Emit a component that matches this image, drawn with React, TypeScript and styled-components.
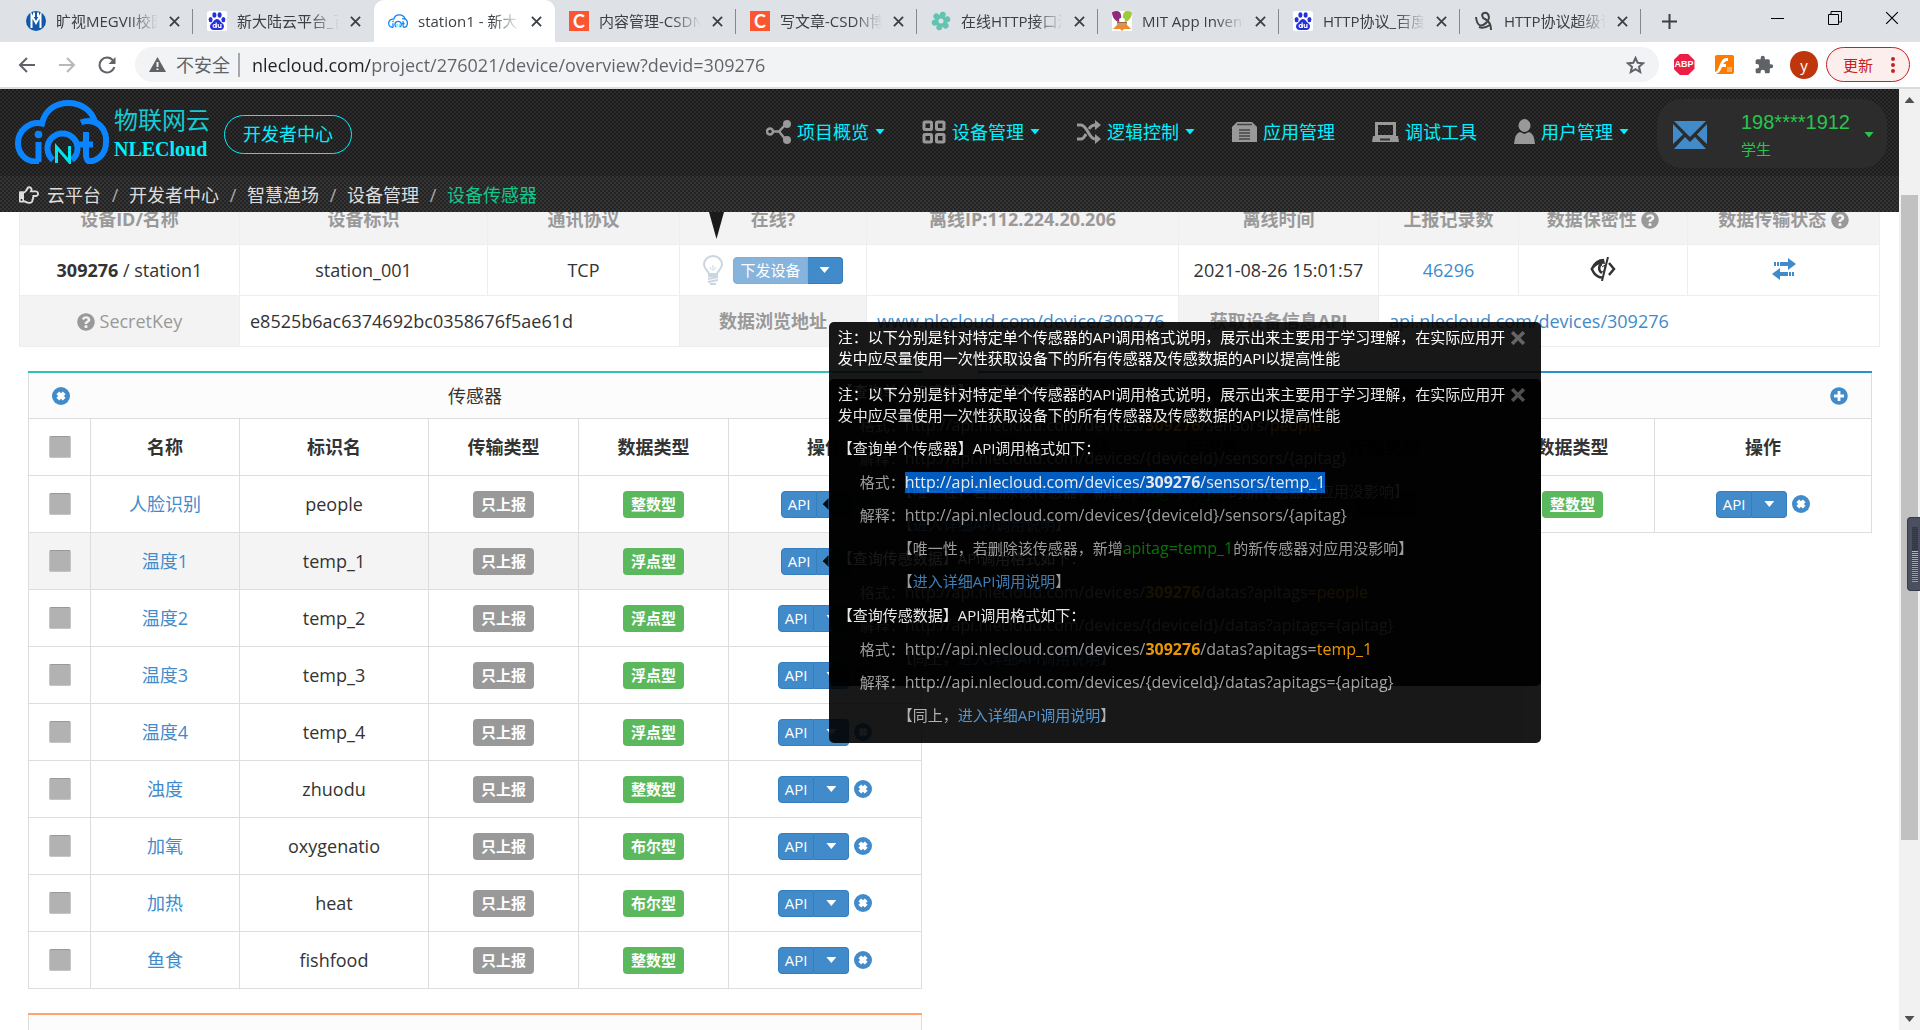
import React from "react";
import styled, { createGlobalStyle, css } from "styled-components";
import { FaQuestionCircle, FaPlusCircle, FaRegHandPointRight } from "react-icons/fa";

const SANS = `"Open Sans", "Noto Sans CJK SC", sans-serif`;

const GlobalStyle = createGlobalStyle`
  *, *::before, *::after { box-sizing: border-box; }
  body { margin: 0; background: #fff; color: #333; font: 18px/24px ${SANS}; overflow: hidden; }
  button, input { font: inherit; color: inherit; }
  button { border: 0; background: none; padding: 0; cursor: pointer; }
  a { color: #428bca; text-decoration: none; }
  p, h2, ol { margin: 0; padding: 0; font: inherit; list-style: none; }
  svg { display: block; flex: none; }
`;

const Window = styled.div`
  display: flex;
  flex-direction: column;
  height: 100vh;
`;

/* ---------- browser chrome ---------- */

const TabStrip = styled.div`
  display: flex;
  align-items: stretch;
  height: 42px;
  padding-left: 12px;
  background: #dee1e6;
`;

const TabBox = styled.div<{ $active?: boolean; $divider?: boolean }>`
  flex: 0 1 181px;
  min-width: 0;
  display: flex;
  align-items: center;
  gap: 10px;
  padding: 0 13px 0 14px;
  color: #3c4043;
  ${(p) =>
    p.$active &&
    css`
      background: #fff;
      border-radius: 10px 10px 0 0;
    `}
  ${(p) =>
    p.$divider &&
    css`
      background: linear-gradient(#85888c, #85888c) right center / 1px 25px no-repeat;
    `}
`;

const TabTitle = styled.span`
  flex: 1;
  min-width: 0;
  overflow: hidden;
  white-space: nowrap;
  font-size: 15px;
  line-height: 22px;
  mask-image: linear-gradient(to right, #000 72%, transparent 100%);
`;

const TabClose = styled.button`
  display: grid;
  place-items: center;
  width: 12px;
  height: 20px;
  color: #3c4043;
`;

const NewTab = styled.button`
  display: grid;
  place-items: center;
  width: 56px;
  color: #3c4043;
`;

const WindowControls = styled.div`
  display: flex;
  margin-left: auto;
  height: 36px;
  color: #000;
  button {
    display: grid;
    place-items: center;
    width: 57px;
  }
`;

const Favicon = styled.span<{ $bg?: string }>`
  flex: none;
  display: grid;
  place-items: center;
  width: 20px;
  height: 20px;
  background: ${(p) => p.$bg || "transparent"};
  color: #fff;
  font: bold 18px/20px Lato, sans-serif;
`;

const Toolbar = styled.div`
  display: flex;
  align-items: center;
  height: 47px;
  padding: 0 10px 0 7px;
  border-bottom: 2px solid #dadce0;
  color: #5f6368;
`;

const ToolButton = styled.button<{ $faded?: boolean }>`
  display: grid;
  place-items: center;
  width: 40px;
  height: 36px;
  opacity: ${(p) => (p.$faded ? 0.45 : 1)};
`;

const Omnibox = styled.div`
  flex: 1;
  display: flex;
  align-items: center;
  height: 35px;
  margin-left: 8px;
  margin-right: 5px;
  padding: 0 14px;
  border-radius: 18px;
  background: #f1f3f4;
`;

const Insecure = styled.button`
  display: flex;
  align-items: center;
  gap: 10px;
  padding-right: 8px;
  margin-right: 12px;
  border-right: 2px solid #a5a8ac;
  line-height: 24px;
`;

const Address = styled.input`
  flex: 1;
  min-width: 0;
  border: 0;
  outline: 0;
  padding: 0;
  height: 30px;
  color: #5f6368;
  background: linear-gradient(to right, #202124 118px, #5f6368 118px);
  background-clip: text;
  -webkit-background-clip: text;
  -webkit-text-fill-color: transparent;
`;

const AbpBadge = styled.span`
  width: 21px;
  height: 21px;
  background: #ed1e45;
  color: #fff;
  font: bold 9px/21px "Liberation Sans", sans-serif;
  clip-path: polygon(30% 0, 70% 0, 100% 30%, 100% 70%, 70% 100%, 30% 100%, 0 70%, 0 30%);
`;

const Avatar = styled.button`
  width: 28px;
  height: 28px;
  margin: 0 8px 0 6px;
  border-radius: 50%;
  background: #bf360c;
  color: #fff;
  font-size: 15px;
  line-height: 26px;
`;

const UpdateButton = styled.button`
  display: flex;
  align-items: center;
  justify-content: space-between;
  width: 84px;
  height: 35px;
  padding: 0 14px 0 16px;
  border: 1px solid #c5221f;
  border-radius: 18px;
  background: #fceeed;
  color: #c5221f;
  font-size: 15px;
`;

/* ---------- page frame ---------- */

const Viewport = styled.div`
  flex: 1;
  min-height: 0;
  display: flex;
  position: relative;
`;

const Page = styled.div`
  flex: 1;
  min-width: 0;
  display: flex;
  flex-direction: column;
`;

const Scrollbar = styled.div`
  width: 21px;
  display: flex;
  flex-direction: column;
  align-items: center;
  justify-content: space-between;
  padding: 8px 0;
  background: #f1f1f1;
`;

const ScrollTrack = styled.div`
  flex: 1;
  width: 17px;
  padding: 92px 0 176px;
  &::before {
    content: "";
    display: block;
    height: 100%;
    background: #c1c1c1;
  }
`;

const Triangle = styled.span<{ $up?: boolean; $color?: string }>`
  display: inline-block;
  flex: none;
  width: 10px;
  height: 6px;
  background: ${(p) => p.$color || "currentColor"};
  clip-path: ${(p) => (p.$up ? "polygon(0 100%, 50% 0, 100% 100%)" : "polygon(0 0, 100% 0, 50% 100%)")};
`;

const LevelMeter = styled.div`
  position: absolute;
  right: 0;
  top: 428px;
  width: 13px;
  height: 74px;
  padding: 9px 2px 8px 4px;
  border: 1px solid #363a47;
  border-right: 0;
  border-radius: 4px 0 0 4px;
  background: #4b5060;
  &::before {
    content: "";
    display: block;
    height: 100%;
    background: repeating-linear-gradient(to bottom, transparent 0 1px, #3a3f4d 1px 2px),
      linear-gradient(to bottom, #343946 0 44%, #c8c63c 44%, #7cc25a 72%, #4fc3ad 100%);
  }
`;

const weave = (dark: string, light: string) => css`
  background: repeating-conic-gradient(${dark} 0 25%, ${light} 0 50%) 0 0 / 4px 4px;
`;

const SiteHeader = styled.header`
  position: relative;
  z-index: 5;
`;

const HeaderMain = styled.div`
  display: flex;
  align-items: center;
  height: 87px;
  padding: 0 12px 2px 15px;
  ${weave("#1d1d1d", "#2b2b2b")}
`;

const Brand = styled.a`
  display: flex;
  align-items: center;
  gap: 5px;
`;

const BrandText = styled.span`
  display: grid;
  padding-top: 4px;
  color: #17c9d2;
  font-size: 24px;
  line-height: 30px;
  strong {
    color: #00f0ff;
    font: bold 20px/28px "Liberation Serif", serif;
  }
`;

const CenterButton = styled.a`
  margin: 6px 0 0 14px;
  padding: 0 18px;
  border: 1px solid #00f0ff;
  border-radius: 20px;
  color: #00f0ff;
  line-height: 37px;
  white-space: nowrap;
`;

const MainNav = styled.nav`
  display: flex;
  gap: 37px;
  margin-left: auto;
  margin-right: 28px;
  a {
    display: flex;
    align-items: center;
    gap: 6px;
    color: #00f0ff;
    white-space: nowrap;
  }
  svg {
    color: #999;
  }
`;

const Account = styled.div`
  display: flex;
  align-items: center;
  height: 69px;
  width: 230px;
  margin-top: 4px;
  padding: 2px 13px 0 16px;
  border-radius: 25px;
  background: #2c2c2c;
  color: #2ac44e;
`;

const AccountName = styled.div`
  flex: 1;
  margin-left: 34px;
  font: 20px/28px "Liberation Sans", sans-serif;
  small {
    display: block;
    font: 15px/26px ${SANS};
  }
`;

const Crumbs = styled.nav`
  display: flex;
  align-items: center;
  height: 36px;
  padding: 1px 0 0 19px;
  color: #ddd;
  ${weave("#232323", "#353535")}
  ol {
    display: flex;
    margin-left: 8px;
  }
  li + li::before {
    content: "/";
    display: inline-block;
    width: 28px;
    text-align: center;
    color: #aaa;
  }
  a {
    color: #ddd;
  }
  li:last-child a {
    color: #10c78c;
  }
`;

const Content = styled.main`
  flex: 1;
  min-height: 0;
  overflow: hidden;
`;

/* ---------- device table ---------- */

const DeviceTable = styled.table`
  width: calc(100% - 38px);
  margin: -19px 19px 0;
  table-layout: fixed;
  border-collapse: collapse;
  text-align: center;
  th,
  td {
    height: 51px;
    padding: 0 10px;
    border: 1px solid #eee;
    white-space: nowrap;
  }
  th {
    background: #f3f3f3;
    color: #999;
  }
  svg {
    display: inline-block;
    vertical-align: -3px;
  }
`;

const LeftCell = styled.td`
  text-align: left;
`;

const PlainTh = styled.th`
  font-weight: 400;
`;

const OnlineCell = styled.td`
  position: relative;
`;

const HintArrow = styled.span`
  position: absolute;
  left: 29px;
  top: -33px;
  width: 15px;
  height: 27px;
  background: #1a1a1a;
  clip-path: polygon(0 0, 100% 0, 50% 100%);
`;

const Inline = styled.div<{ $gap: number; $shift?: boolean }>`
  display: flex;
  align-items: center;
  justify-content: center;
  gap: ${(p) => p.$gap}px;
  padding-left: ${(p) => (p.$shift ? 6 : 0)}px;
`;

/* ---------- buttons and labels ---------- */

const Group = styled.div`
  display: flex;
  position: relative;
`;

const GroupButton = styled.button<{ $light?: boolean }>`
  height: 27px;
  padding: 0 6px;
  border: 1px solid #357ebd;
  background: #428bca;
  color: #fff;
  font-size: 15px;
  line-height: 24px;
  border-radius: 4px 0 0 4px;
  ${(p) =>
    p.$light &&
    css`
      border-color: #7dafda;
      background: #86b4dd;
    `}
`;

const DropButton = styled.button`
  display: grid;
  place-items: center;
  width: 35px;
  height: 27px;
  border: 1px solid #357ebd;
  border-left: 0;
  border-radius: 0 4px 4px 0;
  background: #428bca;
  color: #fff;
`;

const IconButton = styled.button`
  color: #428bca;
`;

const Tag = styled.span<{ $green?: boolean; $linked?: boolean }>`
  display: inline-block;
  height: 27px;
  padding: 0 8px;
  border-radius: 4px;
  background: ${(p) => (p.$green ? "#5cb85c" : "#999")};
  color: #fff;
  font-size: 15px;
  font-weight: 700;
  line-height: 26px;
  vertical-align: middle;
  text-decoration: ${(p) => (p.$linked ? "underline" : "none")};
`;

const Tick = styled.input`
  appearance: none;
  display: block;
  width: 22px;
  height: 22px;
  margin: 0 auto;
  border: 1px solid #c4c4c4;
  border-top-color: #999;
  border-radius: 2px;
  background: #b2b2b2;
`;

/* ---------- panels ---------- */

const Panels = styled.div`
  display: flex;
  align-items: flex-start;
  gap: 57px;
  padding: 24px 28px 0;
`;

const PanelColumn = styled.div`
  flex: 1;
  min-width: 0;
  display: grid;
  gap: 24px;
`;

const Panel = styled.section<{ $accent: string }>`
  border-top: 2px solid ${(p) => p.$accent};
`;

const PanelHead = styled.div`
  display: grid;
  grid-template-columns: 1fr auto 1fr;
  align-items: center;
  height: 45px;
  padding: 0 23px;
  border: solid #ddd;
  border-width: 0 1px;
  background: #fcfcfc;
  > :last-child {
    justify-self: end;
  }
`;

const SensorTable = styled.table`
  width: 100%;
  table-layout: fixed;
  border-collapse: collapse;
  text-align: center;
  th,
  td {
    height: 57px;
    padding: 0;
    border: 1px solid #ddd;
  }
`;

const Row = styled.tr<{ $hover?: boolean }>`
  background: ${(p) => (p.$hover ? "#f4f4f4" : "transparent")};
`;

/* ---------- API popover ---------- */

const Popover = styled.div`
  position: absolute;
  z-index: 3;
  left: 48px;
  top: 50%;
  width: 712px;
  height: 364px;
  margin-top: -182px;
  padding: 5px 0 0 9px;
  border-radius: 5px;
  background: #000;
  color: #aaa;
  opacity: 0.9;
  font-size: 15px;
  line-height: 21px;
  text-align: left;
  &::before {
    content: "";
    position: absolute;
    left: -6px;
    top: 176px;
    width: 6px;
    height: 12px;
    background: #000;
    clip-path: polygon(100% 0, 100% 100%, 0 50%);
  }
`;

const PopNote = styled.div`
  display: flex;
  align-items: flex-start;
  margin-bottom: 5px;
  color: #fff;
  p {
    flex: 1;
  }
  button {
    width: 30px;
    height: 21px;
    display: grid;
    place-items: center start;
    color: #555;
  }
`;

const PopTitle = styled.h2`
  color: #fff;
  line-height: 35px;
`;

const PopLine = styled.p<{ $deep?: boolean }>`
  display: flex;
  line-height: 33px;
  padding-left: ${(p) => (p.$deep ? 60 : 22)}px;
  white-space: nowrap;
`;

const Code = styled.code<{ $selected?: boolean }>`
  font: 16px/21px ${SANS};
  align-self: center;
  b {
    color: #ffa500;
  }
  ${(p) =>
    p.$selected &&
    css`
      background: #0063d1;
      &,
      b,
      em {
        color: #fff !important;
      }
    `}
`;

const Param = styled.em<{ $green?: boolean }>`
  font-size: 16px;
  font-style: normal;
  color: ${(p) => (p.$green ? "#008000" : "#ffa500")};
`;

/* ---------- drawings ---------- */

const Cross = ({ size = 11, width = 2 }: { size?: number; width?: number }) => (
  <svg width={size} height={size} viewBox="0 0 12 12" stroke="currentColor" strokeWidth={width} fill="none">
    <path d="M1 1L11 11M11 1L1 11" />
  </svg>
);

const RemoveIcon = () => (
  <svg width="18" height="18" viewBox="0 0 18 18">
    <circle cx="9" cy="9" r="9" fill="currentColor" />
    <path d="M5.8 5.8L12.2 12.2M12.2 5.8L5.8 12.2" stroke="#fff" strokeWidth="4" />
  </svg>
);

const Paw = () => (
  <svg width="20" height="20" viewBox="0 0 20 20">
    <rect width="20" height="20" rx="2" fill="#fff" />
    <g fill="#2430dc">
      <ellipse cx="3.6" cy="8.6" rx="2" ry="2.7" />
      <ellipse cx="7.4" cy="4" rx="2" ry="2.8" />
      <ellipse cx="12.6" cy="4" rx="2" ry="2.8" />
      <ellipse cx="16.4" cy="8.6" rx="2" ry="2.7" />
      <path d="M10 8C7.5 8 6.5 11 4.3 12.6C1.8 15 3.2 19 6.4 19H13.6C16.8 19 18.2 15 15.7 12.6C13.5 11 12.5 8 10 8Z" />
    </g>
    <g stroke="#fff" strokeWidth="1.2" fill="none">
      <circle cx="7.6" cy="15" r="1.5" />
      <path d="M9.2 11.5V17M11.2 13V15.5Q11.3 16.5 12.5 16.5T13.8 15.5M13.9 13V17" />
    </g>
  </svg>
);

const CloudLogo = ({ width, height, thick = 6 }: { width: number; height: number; thick?: number }) => (
  <svg width={width} height={height} viewBox="0 0 94 64" fill="none" stroke="#0a84ff" strokeWidth={thick}>
    <path d="M24 61.5H20A18 18 0 0 1 3 43A20 20 0 0 1 27 23.5C30 10 41 3 53 3C67 3 77 11 80 22A20 20 0 0 1 91 42C91 54 83 61 74 61.5C71 60 71 56 71 52V32" />
    <path d="M66 22.5C72 20 77 21 82 23M23.5 42V62M64 44.5H78" />
    <circle cx="23.5" cy="34.5" r="3.8" fill="#0a84ff" stroke="none" />
    <path d="M38 60A15 15 0 1 1 57 60" />
    <path d="M41.5 63V47L54.5 62V46" stroke="#00e5f0" strokeWidth={thick / 2} />
  </svg>
);

const MegIcon = () => (
  <svg width="20" height="20" viewBox="0 0 20 20">
    <circle cx="10" cy="10" r="10" fill="#1258a8" />
    <path d="M5.5 17V4L10 12L14.5 4V17M8 1.500V6M12 1.500V6" stroke="#fff" strokeWidth="2" fill="none" />
  </svg>
);

const FlowerIcon = () => (
  <svg width="20" height="20" viewBox="0 0 20 20" fill="#62c3b0">
    {[0, 60, 120, 180, 240, 300].map((a) => (
      <circle key={a} cx="10" cy="3.5" r="3" transform={`rotate(${a + 15} 10 10)`} />
    ))}
    <circle cx="10" cy="10" r="6" />
    <circle cx="10" cy="10" r="2.5" fill="#dee1e6" />
  </svg>
);

const BeeIcon = () => (
  <svg width="20" height="20" viewBox="0 0 20 20">
    <rect width="20" height="20" fill="#fff" />
    <path d="M0 1Q8-2 9 4Q10 10 6 11Q0 8 0 1Z" fill="#8e2a7a" />
    <path d="M20 1Q12-2 11 4Q10 10 14 11Q20 8 20 1Z" fill="#9fcb3b" />
    <rect x="7" y="7" width="6" height="4" rx="2" fill="#fff" />
    <rect x="5" y="11" width="10" height="5" fill="#a06a3c" />
    <path d="M1 18L5 14H15L19 18H12L10 20L8 18Z" fill="#f08a2c" />
    <path d="M5 13H15" stroke="#e8c9a0" />
  </svg>
);

const SketchIcon = () => (
  <svg width="20" height="20" viewBox="0 0 20 20" fill="none" stroke="#444" strokeWidth="2">
    <path d="M2 6C3 15 7 17 13 11M13 11C17 6 14 1 10 2C7 3 8 7 11 8C15 10 17 13 17 19" />
    <path d="M5 16Q10 18 16 14" />
  </svg>
);

const Bulb = () => (
  <svg width="20" height="30" viewBox="0 0 20 30" fill="none" stroke="#cbd5e0" strokeWidth="2">
    <path d="M6 19C5 15 1 14 1 9.5A9 8.5 0 0 1 19 9.5C19 14 15 15 14 19Z" />
    <path d="M5 21H15M5 24L15 22M5 27L15 25M7 29H13" />
    <path d="M10 16V10M7 12L8.5 14.5M13 12L11.5 14.5" strokeWidth="1" />
  </svg>
);

const EyeClosed = () => (
  <svg width="26" height="24" viewBox="0 0 26 24" fill="none" stroke="#333" strokeWidth="2.5">
    <path d="M14 3C8 3 4 7 1.800 12C4 17 8 20.500 12 20.500" />
    <path d="M19 6L24 12L19 18" />
    <path d="M14 2Q5 4 3 12Q8 6 15 7Z" fill="#333" stroke="none" />
    <path d="M12 7C8.500 8 8 14 12 16" />
    <path d="M12 10L15 8L14 14L12 15" strokeWidth="1" />
    <path d="M18 0L12 24" strokeWidth="2" />
  </svg>
);

const Transfer = () => (
  <svg width="24" height="22" viewBox="0 0 24 22" fill="#428bca">
    <path d="M2 4H4V8H2ZM5 4H7V8H5ZM8 4H16V0L24 6L16 12V8H8Z" />
    <path d="M22 14H20V18H22ZM19 14H17V18H19ZM16 14H8V10L0 16L8 22V18H16Z" />
  </svg>
);

const PuzzleIcon = () => (
  <svg width="20" height="20" viewBox="0 0 24 24" fill="currentColor">
    <path d="M20.5 11H19V7c0-1.1-.9-2-2-2h-4V3.500a2.500 2.500 0 0 0-5 0V5H4c-1.100 0-2 .9-2 2v3.800h1.500a2.700 2.700 0 0 1 0 5.400H2V20c0 1.100.9 2 2 2h3.800v-1.500a2.700 2.700 0 0 1 5.400 0V22H17c1.100 0 2-.9 2-2v-4h1.500a2.500 2.500 0 0 0 0-5z" />
  </svg>
);

const ShareIcon = () => (
  <svg width="25" height="24" viewBox="0 0 25 24">
    <g stroke="currentColor" strokeWidth="2.5" fill="none">
      <circle cx="4" cy="11.5" r="3" />
      <path d="M7 11.5H13L20 4M13 11.5L20 20" />
    </g>
    <circle cx="21" cy="4" r="4" fill="currentColor" />
    <circle cx="21" cy="20" r="4" fill="currentColor" />
  </svg>
);

const GridIcon = () => (
  <svg width="24" height="24" viewBox="0 0 24 24" fill="none" stroke="currentColor" strokeWidth="3">
    <rect x="2" y="2" width="7.5" height="7.5" rx="1" />
    <rect x="14.5" y="2" width="7.5" height="7.5" rx="1" />
    <rect x="2" y="14.5" width="7.5" height="7.5" rx="1" />
    <rect x="14.5" y="14.5" width="7.5" height="7.5" rx="1" />
  </svg>
);

const ShuffleIcon = () => (
  <svg width="24" height="24" viewBox="0 0 24 24" fill="none" stroke="currentColor" strokeWidth="3">
    <path d="M0 5H4C10 5 12 19 18 19H20M0 19H4C6 19 8 16 9 14M12 9C14 6 15 5 18 5H20" />
    <path d="M18 0L24 5L18 10ZM18 14L24 19L18 24Z" fill="currentColor" stroke="none" />
  </svg>
);

const AppIcon = () => (
  <svg width="25" height="20" viewBox="0 0 25 20" fill="currentColor">
    <path d="M5 0H20L25 5V20H0V5Z" />
    <path d="M5 2.500H20M7 8H18M7 11H18M7 14H18M7 17H18" stroke="#444" strokeWidth="1.5" />
  </svg>
);

const LaptopIcon = () => (
  <svg width="27" height="20" viewBox="0 0 27 20">
    <rect x="4.500" y="1.500" width="18" height="13" fill="none" stroke="currentColor" strokeWidth="3" />
    <path d="M1 14H26L27 20H0Z" fill="currentColor" />
    <path d="M8 17.500H18" stroke="#333" strokeWidth="2" />
  </svg>
);

const PersonIcon = () => (
  <svg width="21" height="25" viewBox="0 0 21 25" fill="currentColor">
    <ellipse cx="10.5" cy="6.5" rx="6" ry="6.5" />
    <path d="M6 13L10.5 15L15 13Q20 14 21 25H0Q1 14 6 13Z" />
  </svg>
);

const MailIcon = () => (
  <svg width="34" height="28" viewBox="0 0 34 28" fill="#428bca">
    <path d="M1 0H33L17 16ZM0 3L10 13.5L0 23ZM34 3L24 13.5L34 23ZM1 28L12 16L17 21L22 16L33 28Z" />
  </svg>
);

/* ---------- data ---------- */

const tabs = [
  { icon: <MegIcon />, title: "旷视MEGVII校园招聘", divider: true },
  { icon: <Paw />, title: "新大陆云平台_百度搜索" },
  { icon: <CloudLogo width={20} height={16} />, title: "station1 - 新大陆物联网", active: true },
  { icon: "C", bg: "#fc5531", title: "内容管理-CSDN博客", divider: true },
  { icon: "C", bg: "#fc5531", title: "写文章-CSDN博客", divider: true },
  { icon: <FlowerIcon />, title: "在线HTTP接口测试", divider: true },
  { icon: <BeeIcon />, title: "MIT App Inventor", divider: true },
  { icon: <Paw />, title: "HTTP协议_百度百科", divider: true },
  { icon: <SketchIcon />, title: "HTTP协议超级详解", divider: true },
];

const menu = [
  { icon: <ShareIcon />, label: "项目概览", drop: true },
  { icon: <GridIcon />, label: "设备管理", drop: true },
  { icon: <ShuffleIcon />, label: "逻辑控制", drop: true },
  { icon: <AppIcon />, label: "应用管理" },
  { icon: <LaptopIcon />, label: "调试工具" },
  { icon: <PersonIcon />, label: "用户管理", drop: true },
];

const crumbs = ["云平台", "开发者中心", "智慧渔场", "设备管理", "设备传感器"];

type Item = { name: string; tag: string; type: string; open?: boolean; hover?: boolean; selected?: boolean; linked?: boolean };

const sensors: Item[] = [
  { name: "人脸识别", tag: "people", type: "整数型", open: true },
  { name: "温度1", tag: "temp_1", type: "浮点型", open: true, hover: true, selected: true },
  { name: "温度2", tag: "temp_2", type: "浮点型" },
  { name: "温度3", tag: "temp_3", type: "浮点型" },
  { name: "温度4", tag: "temp_4", type: "浮点型" },
  { name: "浊度", tag: "zhuodu", type: "整数型" },
  { name: "加氧", tag: "oxygenatio", type: "布尔型" },
  { name: "加热", tag: "heat", type: "布尔型" },
  { name: "鱼食", tag: "fishfood", type: "整数型" },
];

const actuators: Item[] = [{ name: "test", tag: "test1", type: "整数型", linked: true }];

/* ---------- composed parts ---------- */

const ApiPopover = ({ tag, selected }: { tag: string; selected?: boolean }) => (
  <Popover role="tooltip">
    <PopNote>
      <p>
        注：以下分别是针对特定单个传感器的API调用格式说明，展示出来主要用于学习理解，在实际应用开发中应尽量使用一次性获取设备下的所有传感器及传感数据的API以提高性能
      </p>
      <button aria-label="关闭">
        <Cross size={14} width={3} />
      </button>
    </PopNote>
    <PopTitle>【查询单个传感器】API调用格式如下：</PopTitle>
    <PopLine>
      格式：
      <Code $selected={selected}>
        http://api.nlecloud.com/devices/<b>309276</b>/sensors/<Param>{tag}</Param>
      </Code>
    </PopLine>
    <PopLine>
      解释：<Code>{"http://api.nlecloud.com/devices/{deviceId}/sensors/{apitag}"}</Code>
    </PopLine>
    <PopLine $deep>
      【唯一性，若删除该传感器，新增<Param $green>apitag={tag}</Param>的新传感器对应用没影响】
    </PopLine>
    <PopLine $deep>
      【<a href="#api">进入详细API调用说明</a>】
    </PopLine>
    <PopTitle>【查询传感数据】API调用格式如下：</PopTitle>
    <PopLine>
      格式：
      <Code>
        http://api.nlecloud.com/devices/<b>309276</b>/datas?apitags=<Param>{tag}</Param>
      </Code>
    </PopLine>
    <PopLine>
      解释：<Code>{"http://api.nlecloud.com/devices/{deviceId}/datas?apitags={apitag}"}</Code>
    </PopLine>
    <PopLine $deep>
      【同上，<a href="#api">进入详细API调用说明</a>】
    </PopLine>
  </Popover>
);

const ItemTable = ({ items, widths }: { items: Item[]; widths: number[] }) => (
  <SensorTable>
    <colgroup>
      {widths.map((w, i) => (
        <col key={i} width={w} />
      ))}
    </colgroup>
    <thead>
      <tr>
        <th>
          <Tick type="checkbox" aria-label="全选" />
        </th>
        {["名称", "标识名", "传输类型", "数据类型", "操作"].map((h) => (
          <th key={h}>{h}</th>
        ))}
      </tr>
    </thead>
    <tbody>
      {items.map((s) => (
        <Row key={s.tag} $hover={s.hover}>
          <td>
            <Tick type="checkbox" aria-label={s.name} />
          </td>
          <td>
            <a href="#item">{s.name}</a>
          </td>
          <td>{s.tag}</td>
          <td>
            <Tag>只上报</Tag>
          </td>
          <td>
            <Tag $green $linked={s.linked}>
              {s.type}
            </Tag>
          </td>
          <td>
            <Inline $gap={5} $shift={s.open}>
              <Group>
                <GroupButton>API</GroupButton>
                <DropButton aria-label="更多">
                  <Triangle />
                </DropButton>
                {s.open && <ApiPopover tag={s.tag} selected={s.selected} />}
              </Group>
              <IconButton aria-label="删除">
                <RemoveIcon />
              </IconButton>
            </Inline>
          </td>
        </Row>
      ))}
    </tbody>
  </SensorTable>
);

const BrowserChrome = () => (
  <>
    <TabStrip>
      {tabs.map((t, i) => (
        <TabBox key={i} $active={t.active} $divider={t.divider}>
          <Favicon $bg={t.bg}>{t.icon}</Favicon>
          <TabTitle>{t.title}</TabTitle>
          <TabClose aria-label="关闭标签页">
            <Cross size={11} />
          </TabClose>
        </TabBox>
      ))}
      <NewTab aria-label="新标签页">
        <svg width="15" height="15" viewBox="0 0 15 15" stroke="currentColor" strokeWidth="2">
          <path d="M7.5 0V15M0 7.5H15" />
        </svg>
      </NewTab>
      <WindowControls>
        <button aria-label="最小化">
          <svg width="14" height="14" stroke="currentColor">
            <path d="M0 7.5H13" />
          </svg>
        </button>
        <button aria-label="还原">
          <svg width="14" height="14" stroke="currentColor" fill="none">
            <path d="M.5 3.5H10.5V13.5H.5ZM3 3.5V.5H13.5V11H10.5" />
          </svg>
        </button>
        <button aria-label="关闭">
          <Cross size={14} width={1} />
        </button>
      </WindowControls>
    </TabStrip>
    <Toolbar>
      <ToolButton aria-label="后退">
        <svg width="18" height="16" viewBox="0 0 18 16" fill="none" stroke="currentColor" strokeWidth="2">
          <path d="M17 8H2M9 1L2 8L9 15" />
        </svg>
      </ToolButton>
      <ToolButton aria-label="前进" $faded>
        <svg width="18" height="16" viewBox="0 0 18 16" fill="none" stroke="currentColor" strokeWidth="2">
          <path d="M1 8H16M9 1L16 8L9 15" />
        </svg>
      </ToolButton>
      <ToolButton aria-label="刷新">
        <svg width="18" height="18" viewBox="0 0 18 18" fill="none" stroke="currentColor" strokeWidth="2">
          <path d="M15 4.5A7.5 7.5 0 1 0 16.3 11" />
          <path d="M17.5 1V8H10.5Z" fill="currentColor" stroke="none" />
        </svg>
      </ToolButton>
      <Omnibox>
        <Insecure>
          <svg width="17" height="15" viewBox="0 0 17 15">
            <path d="M8.5 0L17 15H0Z" fill="currentColor" />
            <path d="M8.5 5V10M8.5 11.5V13" stroke="#f1f3f4" strokeWidth="2" />
          </svg>
          不安全
        </Insecure>
        <Address
          aria-label="地址"
          defaultValue="nlecloud.com/project/276021/device/overview?devid=309276"
          spellCheck={false}
        />
        <IconButton aria-label="收藏">
          <svg width="19" height="18" viewBox="0 0 19 18" fill="none" stroke="#5f6368" strokeWidth="2">
            <path d="M9.5 2L11.7 6.8L17 7.3L13 10.8L14.2 16L9.5 13.2L4.8 16L6 10.8L2 7.3L7.3 6.8Z" />
          </svg>
        </IconButton>
      </Omnibox>
      <ToolButton aria-label="ABP">
        <AbpBadge>ABP</AbpBadge>
      </ToolButton>
      <ToolButton aria-label="Flash">
        <svg width="19" height="19" viewBox="0 0 19 19">
          <rect width="19" height="19" rx="2" fill="#ff7a00" />
          <path d="M0 17C5 16 4 4 11 3H13V6C9 6 10 8 8 9H11V12H7C5 17 3 19 0 19Z" fill="#fff" />
          <path d="M12 12H17V17H12Z" fill="#ffb066" />
        </svg>
      </ToolButton>
      <ToolButton aria-label="扩展程序">
        <PuzzleIcon />
      </ToolButton>
      <Avatar>y</Avatar>
      <UpdateButton>
        更新
        <svg width="4" height="18" viewBox="0 0 4 18" fill="currentColor">
          <circle cx="2" cy="3" r="2" />
          <circle cx="2" cy="9" r="2" />
          <circle cx="2" cy="15" r="2" />
        </svg>
      </UpdateButton>
    </Toolbar>
  </>
);

export default function App() {
  return (
    <Window>
      <GlobalStyle />
      <BrowserChrome />
      <Viewport>
        <Page>
          <SiteHeader>
            <HeaderMain>
              <Brand href="#home">
                <CloudLogo width={94} height={64} />
                <BrandText>
                  物联网云
                  <strong>NLECloud</strong>
                </BrandText>
              </Brand>
              <CenterButton href="#center">开发者中心</CenterButton>
              <MainNav>
                {menu.map((m) => (
                  <a key={m.label} href="#menu">
                    {m.icon}
                    {m.label}
                    {m.drop && <Triangle />}
                  </a>
                ))}
              </MainNav>
              <Account>
                <MailIcon />
                <AccountName>
                  198****1912
                  <small>学生</small>
                </AccountName>
                <Triangle />
              </Account>
            </HeaderMain>
            <Crumbs aria-label="面包屑">
              <FaRegHandPointRight size={20} />
              <ol>
                {crumbs.map((c) => (
                  <li key={c}>
                    <a href="#crumb">{c}</a>
                  </li>
                ))}
              </ol>
            </Crumbs>
          </SiteHeader>
          <Content>
            <DeviceTable>
              <colgroup>
                {[220, 248, 192, 187, 312, 200, 140, 169, 192].map((w, i) => (
                  <col key={i} width={w} />
                ))}
              </colgroup>
              <tbody>
                <tr>
                  <th>设备ID/名称</th>
                  <th>设备标识</th>
                  <th>通讯协议</th>
                  <th>在线?</th>
                  <th>离线IP:112.224.20.206</th>
                  <th>离线时间</th>
                  <th>上报记录数</th>
                  <th>
                    数据保密性 <FaQuestionCircle size={18} />
                  </th>
                  <th>
                    数据传输状态 <FaQuestionCircle size={18} />
                  </th>
                </tr>
                <tr>
                  <td>
                    <b>309276</b> / station1
                  </td>
                  <td>station_001</td>
                  <td>TCP</td>
                  <OnlineCell>
                    <HintArrow />
                    <Inline $gap={10}>
                      <Bulb />
                      <Group>
                        <GroupButton $light>下发设备</GroupButton>
                        <DropButton aria-label="更多">
                          <Triangle />
                        </DropButton>
                      </Group>
                    </Inline>
                  </OnlineCell>
                  <td />
                  <td>2021-08-26 15:01:57</td>
                  <td>
                    <a href="#records">46296</a>
                  </td>
                  <td>
                    <EyeClosed />
                  </td>
                  <td>
                    <Transfer />
                  </td>
                </tr>
                <tr>
                  <PlainTh>
                    <FaQuestionCircle size={18} /> SecretKey
                  </PlainTh>
                  <LeftCell colSpan={2}>e8525b6ac6374692bc0358676f5ae61d</LeftCell>
                  <th>数据浏览地址</th>
                  <LeftCell>
                    <a href="#device">www.nlecloud.com/device/309276</a>
                  </LeftCell>
                  <th>获取设备信息API</th>
                  <LeftCell colSpan={3}>
                    <a href="#api">api.nlecloud.com/devices/309276</a>
                  </LeftCell>
                </tr>
              </tbody>
            </DeviceTable>
            <Panels>
              <PanelColumn>
                <Panel $accent="#2fc1b9">
                  <PanelHead>
                    <IconButton aria-label="删除所选">
                      <RemoveIcon />
                    </IconButton>
                    <h2>传感器</h2>
                    <span />
                  </PanelHead>
                  <ItemTable items={sensors} widths={[62, 149, 189, 150, 150, 193]} />
                </Panel>
                <Panel $accent="#ffa36b">
                  <PanelHead />
                </Panel>
              </PanelColumn>
              <PanelColumn>
                <Panel $accent="#2a90cc">
                  <PanelHead>
                    <IconButton aria-label="删除所选">
                      <RemoveIcon />
                    </IconButton>
                    <h2>执行器</h2>
                    <IconButton aria-label="新增">
                      <FaPlusCircle size={18} />
                    </IconButton>
                  </PanelHead>
                  <ItemTable items={actuators} widths={[62, 105, 133, 212, 164, 217]} />
                </Panel>
              </PanelColumn>
            </Panels>
          </Content>
        </Page>
        <Scrollbar>
          <Triangle $up $color="#505050" />
          <ScrollTrack />
          <Triangle $color="#505050" />
        </Scrollbar>
        <LevelMeter />
      </Viewport>
    </Window>
  );
}
